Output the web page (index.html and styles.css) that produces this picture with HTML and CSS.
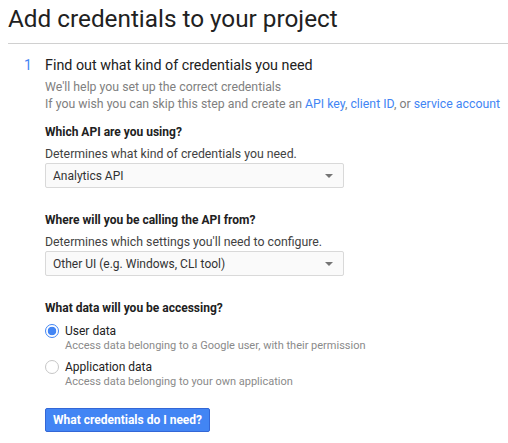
FILE: index.html
```html
<!DOCTYPE html>
<html>
<head>
<meta charset="utf-8">
<link rel="stylesheet" href="styles.css">
</head>
<body>
<header class="page-head">
  <h1 class="title">Add credentials to your project</h1>
</header>
<section class="step">
  <div class="step-num">1</div>
  <div class="step-body">
    <h2 class="step-title">Find out what kind of credentials you need</h2>
    <p class="intro">We'll help you set up the correct credentials<br>If you wish you can skip this step and create an <a href="#">API key</a>, <a href="#">client ID</a>, or <a href="#">service account</a></p>

    <div class="field">
      <div class="label">Which API are you using?</div>
      <div class="hint">Determines what kind of credentials you need.</div>
      <div class="select"><span>Analytics API</span><i class="caret"></i></div>
    </div>

    <div class="field">
      <div class="label">Where will you be calling the API from?</div>
      <div class="hint">Determines which settings you'll need to configure.</div>
      <div class="select"><span>Other UI (e.g. Windows, CLI tool)</span><i class="caret"></i></div>
    </div>

    <div class="field">
      <div class="label">What data will you be accessing?</div>
      <div class="radios">
        <div class="radio">
          <span class="dot checked"></span>
          <div>
            <div class="r-label">User data</div>
            <div class="r-desc">Access data belonging to a Google user, with their permission</div>
          </div>
        </div>
        <div class="radio">
          <span class="dot"></span>
          <div>
            <div class="r-label">Application data</div>
            <div class="r-desc">Access data belonging to your own application</div>
          </div>
        </div>
      </div>
    </div>

    <button class="btn">What credentials do I need?</button>
  </div>
</section>
</body>
</html>
```

FILE: styles.css
```css
html, body {
  margin: 0;
  padding: 0;
  background: #fff;
}
body {
  font-family: Roboto, "Liberation Sans", Arial, sans-serif;
  color: #212121;
}
.page-head {
  margin-left: 8px;
  padding-top: 3px;
  padding-bottom: 8px;
  border-bottom: 1px solid #d0d0d0;
}
.title {
  margin: 0;
  font-size: 24.3px;
  line-height: 32px;
  font-weight: 400;
  color: #212121;
}
.step {
  display: flex;
  padding-top: 11px;
}
.step-num {
  width: 45px;
  box-sizing: border-box;
  padding-left: 24px;
  font-size: 14px;
  line-height: 20px;
  color: #4285f4;
}
.step-body {
  flex: 1;
}
.step-title {
  margin: 0;
  font-size: 14.3px;
  line-height: 20px;
  font-weight: 400;
  color: #212121;
}
.intro {
  margin: 4px 0 0;
  font-size: 12.3px;
  line-height: 17px;
  color: #808080;
}
.intro a {
  color: #4285f4;
  text-decoration: none;
}
.field {
  margin-top: 10px;
}
.field + .field {
  margin-top: 23px;
}
.label {
  font-size: 12px;
  line-height: 18px;
  font-weight: 700;
  color: #212121;
}
.hint {
  margin-top: 4px;
  font-size: 12.3px;
  line-height: 18px;
  color: #424242;
}
.select {
  width: 299px;
  height: 25px;
  box-sizing: border-box;
  border: 1px solid #d9d9d9;
  border-radius: 2px;
  background: #fafafa;
  display: flex;
  align-items: center;
  justify-content: space-between;
  padding: 0 8px 0 7px;
  font-size: 12px;
  color: #333;
}
.caret {
  width: 0;
  height: 0;
  border-left: 4px solid transparent;
  border-right: 4px solid transparent;
  border-top: 4px solid #757575;
  margin-right: 2px;
}
.radios {
  margin-top: 6px;
  display: flex;
  flex-direction: column;
  gap: 6px;
}
.radio {
  display: flex;
  gap: 6px;
}
.dot {
  width: 14px;
  height: 14px;
  box-sizing: border-box;
  border-radius: 50%;
  border: 1px solid #c6c6c6;
  background: #fff;
  margin-top: 1px;
  flex: none;
}
.dot.checked {
  border-color: #4285f4;
  background: radial-gradient(circle, #4285f4 0 4px, #fff 4.6px);
}
.r-label {
  font-size: 12px;
  line-height: 16px;
  color: #212121;
}
.r-desc {
  font-size: 11px;
  line-height: 14px;
  color: #8a8a8a;
}
.btn {
  display: block;
  margin-top: 19px;
  height: 24px;
  padding: 0 7px;
  border: 1px solid #3367d6;
  border-radius: 2px;
  background: #4285f4;
  color: #fff;
  font-family: Roboto, "Liberation Sans", Arial, sans-serif;
  font-size: 12px;
  font-weight: 700;
  line-height: 22px;
}
```
